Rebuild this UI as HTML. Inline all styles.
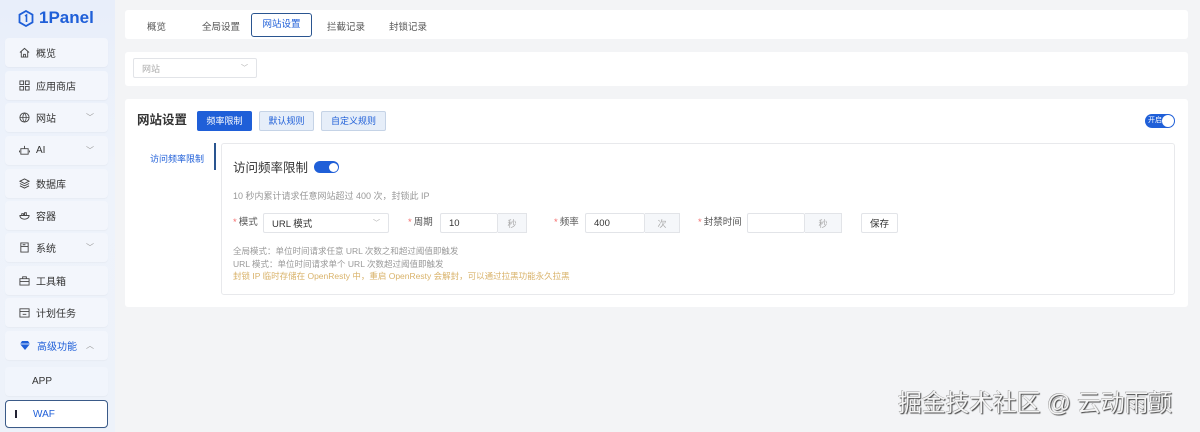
<!DOCTYPE html>
<html><head><meta charset="utf-8"><style>
*{box-sizing:border-box;margin:0;padding:0}
body{width:1200px;height:432px;overflow:hidden;background:#f3f4f6;font-family:"Liberation Sans","Noto Sans CJK SC",sans-serif;position:relative;color:#333}
.a{position:absolute}
.side{left:0;top:0;width:115px;height:432px;background:linear-gradient(180deg,#e8eefa,#eef3fb 40%,#edf2fa);}
.it{position:absolute;left:5px;width:103px;height:29px;background:#f3f6fc;border-radius:4px;font-size:10px;color:#333;display:flex;align-items:center;padding-left:14px;box-shadow:0 1px 1px rgba(0,0,0,.03)}
.it svg{margin-right:6px}
.chev{position:absolute;right:14px;font-size:8px;color:#999}
.card{background:#fff;border-radius:3px}
.t{font-size:9.5px;color:#555}
.inp{position:absolute;border:1px solid #e2e4e8;border-radius:2px;background:#fff;font-size:9.5px;color:#333;display:flex;align-items:center;padding-left:8px}
.suf{position:absolute;border:1px solid #e2e4e8;border-left:none;background:#f5f7fa;font-size:9px;color:#aaa;display:flex;align-items:center;justify-content:center}
.lbl{position:absolute;font-size:9.5px;color:#555;line-height:12px}
.lbl b{color:#f56c6c;font-weight:normal;margin-right:2px}
</style></head><body>
<div class="a side"></div>
<div class="a" style="left:18px;top:8px;font-size:17px;font-weight:bold;color:#1f5fd8;display:flex;align-items:center">
<svg width="16" height="17" viewBox="0 0 16 17"><path d="M8 1L14.5 4.7V12.3L8 16L1.5 12.3V4.7Z" fill="none" stroke="#1f5fd8" stroke-width="1.8"/><path d="M7 6l1.5-1V12" fill="none" stroke="#1f5fd8" stroke-width="1.6"/></svg><span style="margin-left:5px">1Panel</span></div>
<div class="it" style="top:38px"><svg width="11" height="11" viewBox="0 0 12 12"><path d="M1 6L6 1.5 11 6M2.5 5v6h7V5M5 11V8h2v3" fill="none" stroke="#444" stroke-width="1"/></svg>概览</div>
<div class="it" style="top:71px"><svg width="11" height="11" viewBox="0 0 12 12"><path d="M1 1h4v4H1zM7 1h4v4H7zM1 7h4v4H1zM7 7h4v4H7z" fill="none" stroke="#444"/></svg>应用商店</div>
<div class="it" style="top:103px"><svg width="11" height="11" viewBox="0 0 12 12"><circle cx="6" cy="6" r="5" fill="none" stroke="#444"/><path d="M1 6h10M6 1c-2.5 3-2.5 7 0 10M6 1c2.5 3 2.5 7 0 10" fill="none" stroke="#444" stroke-width=".8"/></svg>网站<span class="chev">﹀</span></div>
<div class="it" style="top:136px"><svg width="11" height="11" viewBox="0 0 12 12"><path d="M2 4h8v6H2zM6 1v3M0.5 6v2M11.5 6v2" fill="none" stroke="#444"/></svg>AI<span class="chev">﹀</span></div>
<div class="it" style="top:169px"><svg width="11" height="11" viewBox="0 0 12 12"><path d="M6 1l5 2.5-5 2.5-5-2.5zM1 6l5 2.5 5-2.5M1 8.5l5 2.5 5-2.5" fill="none" stroke="#444"/></svg>数据库</div>
<div class="it" style="top:201px"><svg width="11" height="11" viewBox="0 0 12 12"><path d="M1 6h10c0 3-3 4-5 4S1 9 1 6zM3 4h2v2H3zM6 3h2v3H6z" fill="none" stroke="#444"/></svg>容器</div>
<div class="it" style="top:233px"><svg width="11" height="11" viewBox="0 0 12 12"><path d="M2 1h8v10H2zM2 5h8M4 3h3" fill="none" stroke="#444"/></svg>系统<span class="chev">﹀</span></div>
<div class="it" style="top:266px"><svg width="11" height="11" viewBox="0 0 12 12"><path d="M1 4h10v7H1zM4 4V2h4v2M1 7h10" fill="none" stroke="#444"/></svg>工具箱</div>
<div class="it" style="top:298px"><svg width="11" height="11" viewBox="0 0 12 12"><path d="M1 2h10v9H1zM1 5h10M4 8h4" fill="none" stroke="#444"/></svg>计划任务</div>
<div class="it" style="top:331px;color:#1f5fd8"><svg width="12" height="11" viewBox="0 0 12 11"><path d="M1 4l2-3h6l2 3-5 6z" fill="#1f5fd8"/><path d="M1 4h10" stroke="#fff" stroke-width=".8"/></svg>高级功能<span class="chev" style="color:#999">︿</span></div>
<div class="it" style="top:367px;padding-left:27px;background:#f1f5fc">APP</div>
<div class="it" style="top:400px;height:28px;padding-left:27px;background:#fff;border:1.5px solid #3a5a88;color:#1f5fd8"><span class="a" style="left:9px;top:9px;width:2px;height:8px;background:#223"></span>WAF</div>

<div class="a card" style="left:125px;top:10px;width:1063px;height:29px"></div>
<div class="a t" style="left:147px;top:19px">概览</div>
<div class="a t" style="left:202px;top:19px">全局设置</div>
<div class="a" style="left:251px;top:13px;width:61px;height:24px;border:1.5px solid #2a5590;border-radius:3px;font-size:9.5px;color:#1f5fd8;text-align:center;line-height:21px">网站设置</div>
<div class="a t" style="left:327px;top:19px">拦截记录</div>
<div class="a t" style="left:389px;top:19px">封锁记录</div>

<div class="a card" style="left:125px;top:52px;width:1063px;height:34px"></div>
<div class="inp" style="left:133px;top:58px;width:124px;height:20px;color:#aaa;font-size:9px">网站<span style="position:absolute;right:8px;font-size:7px">﹀</span></div>

<div class="a card" style="left:125px;top:99px;width:1063px;height:208px"></div>
<div class="a" style="left:137px;top:112px;font-size:12.5px;line-height:16px;font-weight:bold;color:#333">网站设置</div>
<div class="a" style="left:197px;top:111px;width:55px;height:20px;background:#1f5fd8;border-radius:2px;color:#fff;font-size:9px;text-align:center;line-height:20px">频率限制</div>
<div class="a" style="left:259px;top:111px;width:55px;height:20px;background:#e6eef9;border:1px solid #c5d3e6;border-radius:2px;color:#1f5fd8;font-size:9px;text-align:center;line-height:18px">默认规则</div>
<div class="a" style="left:321px;top:111px;width:65px;height:20px;background:#e6eef9;border:1px solid #c5d3e6;border-radius:2px;color:#1f5fd8;font-size:9px;text-align:center;line-height:18px">自定义规则</div>
<div class="a" style="left:1145px;top:114px;width:30px;height:14px;background:#1f5fd8;border-radius:7px;"><span class="a" style="left:3px;top:0;font-size:7px;line-height:14px;color:#fff">开启</span><span class="a" style="right:1px;top:1px;width:12px;height:12px;border-radius:50%;background:#fff"></span></div>

<div class="a" style="left:150px;top:152px;font-size:9px;color:#1f5fd8">访问频率限制</div>
<div class="a" style="left:214px;top:143px;width:1.5px;height:27px;background:#2a5590"></div>

<div class="a" style="left:221px;top:143px;width:954px;height:152px;border:1px solid #e8e9ec;border-radius:3px;background:#fff"></div>
<div class="a" style="left:233px;top:159px;font-size:12.5px;line-height:18px;color:#333">访问频率限制</div>
<div class="a" style="left:314px;top:161px;width:25px;height:12px;background:#1f5fd8;border-radius:6px"><span class="a" style="right:1.5px;top:1.5px;width:9px;height:9px;border-radius:50%;background:#fff"></span></div>
<div class="a" style="left:233px;top:189px;font-size:9px;color:#999">10 秒内累计请求任意网站超过 400 次，封锁此 IP</div>

<div class="lbl" style="left:233px;top:217px"><b>*</b>模式</div>
<div class="inp" style="left:263px;top:213px;width:126px;height:20px">URL 模式<span style="position:absolute;right:8px;font-size:7px;color:#aaa">﹀</span></div>
<div class="lbl" style="left:408px;top:217px"><b>*</b>周期</div>
<div class="inp" style="left:440px;top:213px;width:58px;height:20px">10</div>
<div class="suf" style="left:498px;top:213px;width:29px;height:20px">秒</div>
<div class="lbl" style="left:554px;top:217px"><b>*</b>频率</div>
<div class="inp" style="left:585px;top:213px;width:60px;height:20px">400</div>
<div class="suf" style="left:645px;top:213px;width:35px;height:20px">次</div>
<div class="lbl" style="left:698px;top:217px"><b>*</b>封禁时间</div>
<div class="inp" style="left:747px;top:213px;width:58px;height:20px"></div>
<div class="suf" style="left:805px;top:213px;width:37px;height:20px">秒</div>
<div class="inp" style="left:861px;top:213px;width:37px;height:20px;padding-left:0;justify-content:center">保存</div>

<div class="a" style="left:233px;top:245px;font-size:8.5px;line-height:12.5px;color:#999">全局模式：单位时间请求任意 URL 次数之和超过阈值即触发<br>URL 模式：单位时间请求单个 URL 次数超过阈值即触发<br><span style="color:#d9b36b">封锁 IP 临时存储在 OpenResty 中，重启 OpenResty 会解封，可以通过拉黑功能永久拉黑</span></div>

<div class="a" style="left:898px;top:389px;font-size:24px;line-height:30px;color:#f4f4f4;letter-spacing:-0.3px;text-shadow:1px 1px 1px #444,-0.5px -0.5px 0 #999">掘金技术社区 @ 云动雨颤</div>
</body></html>
